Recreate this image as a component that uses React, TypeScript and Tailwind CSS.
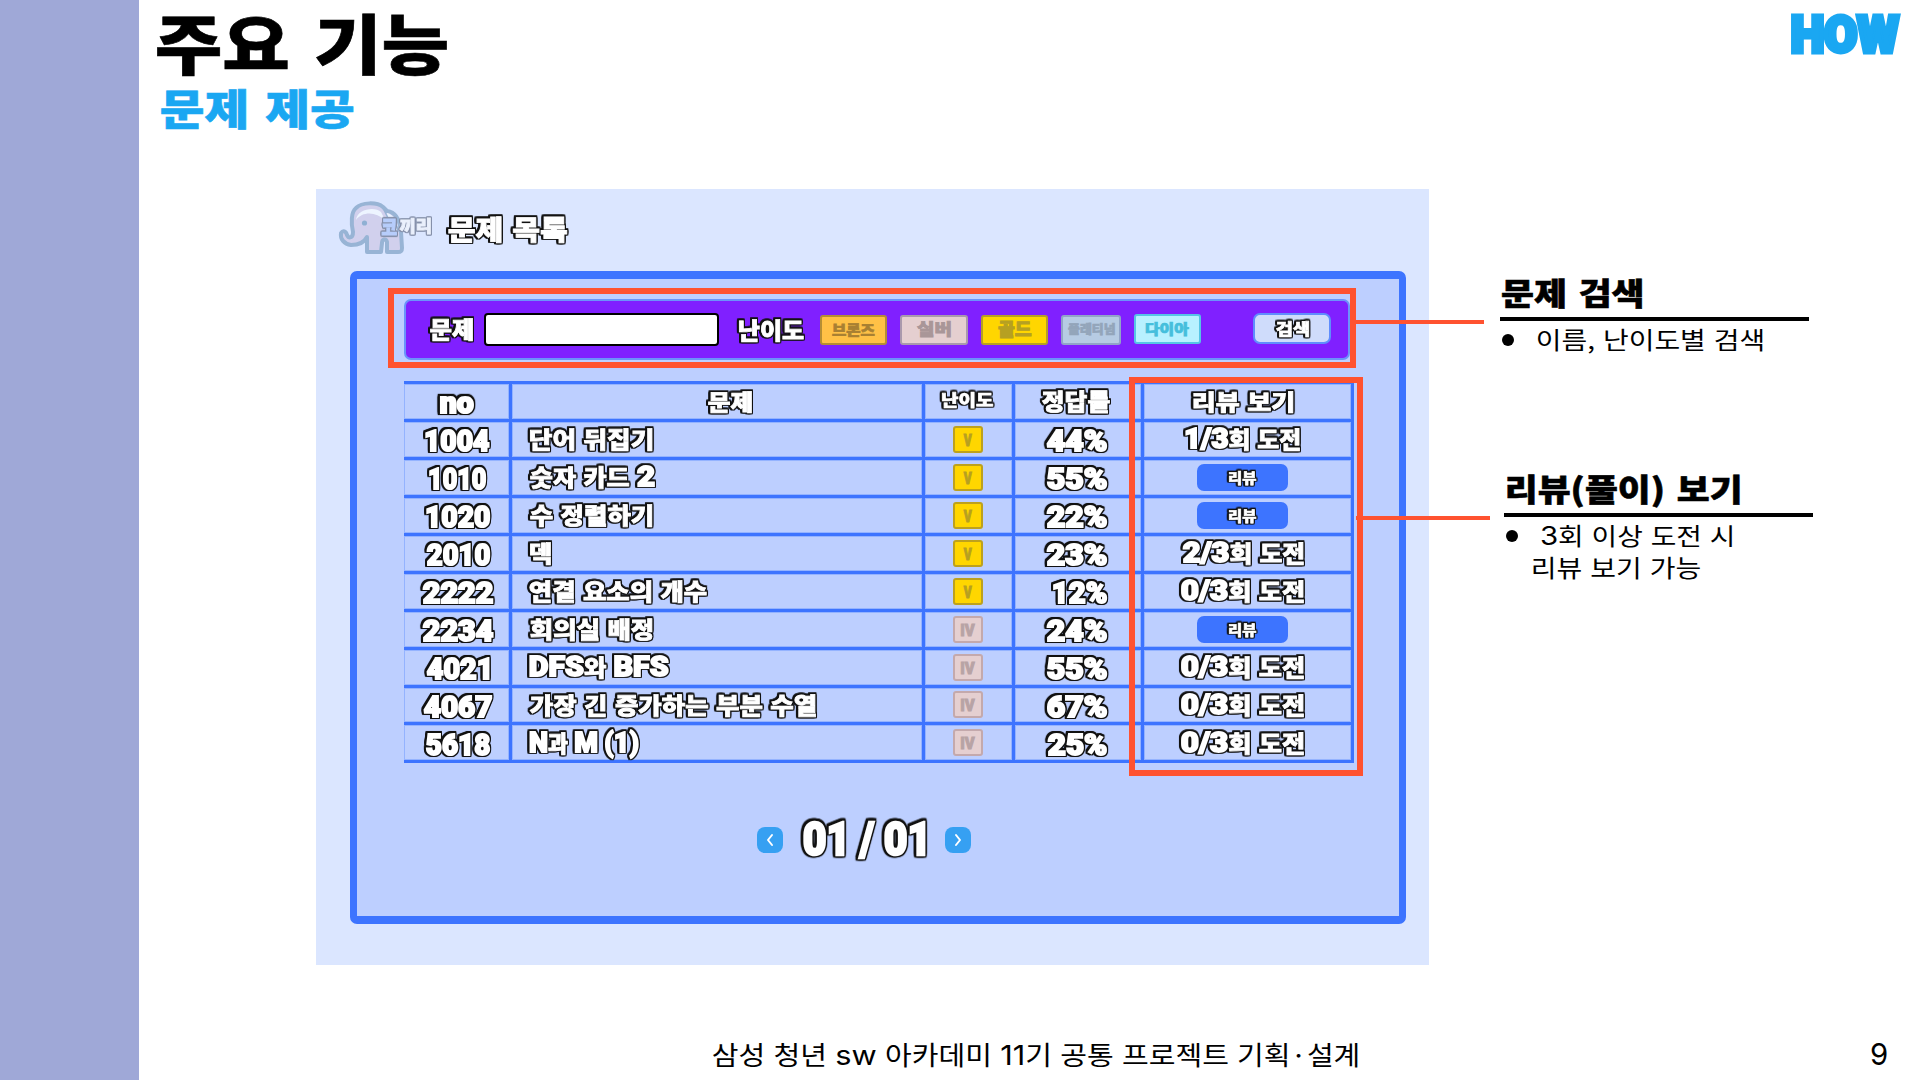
import { useLayoutEffect, useRef } from "react";
import clsx from "clsx";

const LATIN = {
  none: { scale: 1, family: "", cls: "" },
  heavy: { scale: 1.24, family: "Roboto, ", cls: "text-[1.24em] leading-[0] font-[Roboto,sans-serif]" },
  light: { scale: 1.06, family: "Inter, ", cls: "text-[1.06em] leading-[0] font-[Inter,sans-serif]" },
};

/** One line of text whose inked area is stretched to fill its box; `latin` picks the face of latin letters and digits. */
function Ink({ box, text, pad = 0, latin = "none", latinText, children }: { box: string; text: string; pad?: number; latin?: keyof typeof LATIN; latinText?: string; children: string }) {
  const outer = useRef<HTMLDivElement>(null);
  const inner = useRef<HTMLSpanElement>(null);
  const face = LATIN[latin];
  const parts = latin !== "none" ? children.split(/([A-Za-z0-9%/()]+)/).filter(Boolean) : [children];
  const isLatin = (p: string) => latin !== "none" && /^[A-Za-z0-9%/()]/.test(p);
  useLayoutEffect(() => {
    const o = outer.current;
    const s = inner.current;
    const ctx = document.createElement("canvas").getContext("2d");
    if (!o || !s || !ctx) return;
    const cs = getComputedStyle(s);
    const size = parseFloat(cs.fontSize);
    const font = (alt: boolean) =>
      `${cs.fontWeight} ${size * (alt ? face.scale : 1)}px ${alt ? face.family : ""}"Noto Sans CJK KR", sans-serif`;
    ctx.font = font(false);
    ctx.wordSpacing = cs.wordSpacing;
    const strut = ctx.measureText("가");
    const base = (size - strut.fontBoundingBoxAscent - strut.fontBoundingBoxDescent) / 2 + strut.fontBoundingBoxAscent;
    let x = 0;
    let left = 0;
    let right = 0;
    let up = 0;
    let down = 0;
    parts.forEach((p, i) => {
      ctx.font = font(isLatin(p));
      const m = ctx.measureText(p);
      if (i === 0) left = m.actualBoundingBoxLeft;
      right = x + m.actualBoundingBoxRight;
      x += m.width;
      const body = p.replace(/[/(),]/g, "").trim();
      if (body) {
        const v = ctx.measureText(body);
        up = Math.max(up, v.actualBoundingBoxAscent);
        down = Math.max(down, v.actualBoundingBoxDescent);
      }
    });
    const sx = (o.clientWidth - pad * 2) / (left + right);
    const sy = (o.clientHeight - pad * 2) / (up + down);
    s.style.transform = `translate(${pad + left * sx}px, ${pad - (base - up) * sy}px) scale(${sx}, ${sy})`;
  });
  return (
    <div ref={outer} className={clsx("shrink-0", box)}>
      <span
        ref={inner}
        className={clsx("block w-max origin-top-left whitespace-pre leading-none font-['Noto_Sans_CJK_KR',sans-serif]", text)}
      >
        {parts.map((p, i) =>
          isLatin(p) ? (
            <span key={i} className={clsx(face.cls, latinText)}>{p}</span>
          ) : (
            p
          ),
        )}
      </span>
    </div>
  );
}

const OUTLINE =
  "font-black text-white [-webkit-text-stroke:0.9px_white] [word-spacing:0.06em] [filter:drop-shadow(1.2px_0_0_#111)_drop-shadow(-1.2px_0_0_#111)_drop-shadow(0_1.2px_0_#111)_drop-shadow(0_-1.2px_0_#111)]";

function Outlined({ box, size, children }: { box: string; size: string; children: string }) {
  return (
    <Ink box={box} text={clsx(OUTLINE, size)} pad={1.8} latin="heavy" latinText="[-webkit-text-stroke:2px_white]">
      {children}
    </Ink>
  );
}

function Elephant() {
  return (
    <svg className="h-[54px] w-[68px]" viewBox="0 0 68 54" fill="none">
      <path
        d="M15 31 C13 22 13 11 18 7 C24 1 39 1 45 6 L49 10 C58 11 62 20 63 31 L64 47 C64 50 63 51 60 51 L49 51 L49 41 C48 37 44 38 44 42 L43 51 L29 51 L29 36 C26 42 20 44 13 44 C6 43 2 38 3 32 C5 29 8 30 9 34 C11 38 15 37 15 31Z"
        fill="#d1d0ed"
        stroke="#98b4d5"
        strokeWidth="4"
        strokeLinejoin="round"
      />
      <path d="M18 19 C19 8 37 5 43 11 L47 19 C38 11 25 10 18 19Z" fill="#edf4ff" />
      <path d="M49 12 C57 14 60 23 60 30 C56 29 49 21 49 12Z" fill="#eaf2ff" />
      <path d="M46 9 L51 19 C56 19 60 25 60 31" stroke="#98b4d5" strokeWidth="1.500" />
      <circle cx="26.500" cy="22" r="2.600" fill="#8fb0d3" />
    </svg>
  );
}

const GHOST =
  "text-[18px] font-black [filter:drop-shadow(1px_0_0_#8590aa)_drop-shadow(-1px_0_0_#8590aa)_drop-shadow(0_1px_0_#8590aa)_drop-shadow(0_-1px_0_#8590aa)] [-webkit-text-stroke:1px_currentColor]";

type Tier = { label: string; skin: string; box: string; ink: string };

const tiers: Tier[] = [
  { label: "브론즈", skin: "ml-[14px] w-[67px] bg-[#ffc146] border-[#b58e34]", box: "w-[43px] h-[14px]", ink: "text-[#a88032]" },
  { label: "실버", skin: "ml-[13px] w-[68px] bg-[#e5cfd0] border-[#a999ac]", box: "w-[34px] h-[17px]", ink: "text-[#a99698]" },
  { label: "골드", skin: "ml-[13px] w-[67px] bg-[#ffd600] border-[#b6a022]", box: "w-[34px] h-[17px]", ink: "text-[#b6a022]" },
  { label: "플래티넘", skin: "ml-[13px] w-[60px] bg-[#b6cbe3] border-[#91a4c8]", box: "w-[47px] h-[13px]", ink: "text-[#93a5ba]" },
  { label: "다이아", skin: "ml-[13px] -mt-[2px] w-[67px] bg-[#b8f1ff] border-[#55c5e6]", box: "w-[43px] h-[14px]", ink: "text-[#45bfdc]" },
];

function SearchBar() {
  return (
    <div className="flex h-[61px] w-[946px] items-center rounded-[7px] border-2 border-[#6b93fa] bg-[#8020ff]">
      <Outlined box="ml-[22px] w-[47px] h-[26px]" size="text-[25px]">문제</Outlined>
      <div className="ml-[9px] h-[33px] w-[235px] rounded-[4px] border-2 border-black bg-white" />
      <Outlined box="ml-[18px] mt-[2px] w-[69px] h-[26px]" size="text-[25px]">난이도</Outlined>
      {tiers.map((t) => (
        <div key={t.label} className={clsx("flex h-[30px] items-center justify-center rounded-[3px] border-2", t.skin)}>
          <Ink box={t.box} text={clsx("text-[16px] font-black [-webkit-text-stroke:0.9px_currentColor]", t.ink)}>
            {t.label}
          </Ink>
        </div>
      ))}
      <div className="-mt-[2px] ml-[52px] flex h-[31px] w-[78px] items-center justify-center rounded-[7px] border-2 border-[#5f8dfd] bg-[#cfdcfb]">
        <Outlined box="w-[37px] h-[20px]" size="text-[22px]">검색</Outlined>
      </div>
    </div>
  );
}

type Problem = {
  no: string; noBox: string;
  name: string; nameBox: string;
  tier: "V" | "IV";
  rate: string; rateBox: string;
  tries: string | null; triesBox?: string;
};

const problems: Problem[] = [
  { no: "1004", noBox: "w-[67px]", name: "단어 뒤집기", nameBox: "w-[126px]", tier: "V", rate: "44%", rateBox: "w-[63px]", tries: "1/3회 도전", triesBox: "w-[118px]" },
  { no: "1010", noBox: "w-[59px]", name: "숫자 카드 2", nameBox: "w-[128px]", tier: "V", rate: "55%", rateBox: "w-[62px]", tries: null },
  { no: "1020", noBox: "w-[66px]", name: "수 정렬하기", nameBox: "w-[126px]", tier: "V", rate: "22%", rateBox: "w-[63px]", tries: null },
  { no: "2010", noBox: "w-[66px]", name: "덱", nameBox: "w-[25px]", tier: "V", rate: "23%", rateBox: "w-[63px]", tries: "2/3회 도전", triesBox: "w-[125px]" },
  { no: "2222", noBox: "w-[74px]", name: "연결 요소의 개수", nameBox: "w-[181px]", tier: "V", rate: "12%", rateBox: "w-[56px]", tries: "0/3회 도전", triesBox: "w-[126px]" },
  { no: "2234", noBox: "w-[74px]", name: "회의실 배정", nameBox: "w-[126px]", tier: "IV", rate: "24%", rateBox: "w-[63px]", tries: null },
  { no: "4021", noBox: "w-[66px]", name: "DFS와 BFS", nameBox: "w-[142px]", tier: "IV", rate: "55%", rateBox: "w-[62px]", tries: "0/3회 도전", triesBox: "w-[126px]" },
  { no: "4067", noBox: "w-[72px]", name: "가장 긴 증가하는 부분 수열", nameBox: "w-[290px]", tier: "IV", rate: "67%", rateBox: "w-[62px]", tries: "0/3회 도전", triesBox: "w-[126px]" },
  { no: "5618", noBox: "w-[66px]", name: "N과 M (1)", nameBox: "w-[112px]", tier: "IV", rate: "25%", rateBox: "w-[62px]", tries: "0/3회 도전", triesBox: "w-[126px]" },
];

const ROW = "grid h-[37.950px] grid-cols-[108px_413px_90px_129px_210px] border-t-[3px] border-[#3d74ff]";
const CELL = "flex items-center border-r-[3px] border-[#3d74ff] shadow-[inset_0_0_0_1px_#94b3ff]";

function ProblemTable() {
  return (
    <div className="w-[950px] border-b-[3px] border-[#3d74ff]">
      <div className={ROW}>
        <div className={clsx(CELL, "justify-center pl-[1px]")}><Outlined box="mt-[8px] w-[36px] h-[20px]" size="text-[22px]">no</Outlined></div>
        <div className={clsx(CELL, "justify-center pl-[25px]")}><Outlined box="mt-[2px] w-[48px] h-[25px]" size="text-[25px]">문제</Outlined></div>
        <div className={clsx(CELL, "justify-center pr-[3px]")}><Outlined box="-mt-[3px] w-[55px] h-[20px]" size="text-[22px]">난이도</Outlined></div>
        <div className={clsx(CELL, "justify-end pr-[29px]")}><Outlined box="mt-[2px] w-[72px] h-[26px]" size="text-[25px]">정답률</Outlined></div>
        <div className={clsx(CELL, "justify-center pr-[9px]")}><Outlined box="mt-[3px] w-[103px] h-[25px]" size="text-[25px]">리뷰 보기</Outlined></div>
      </div>
      {problems.map((p) => (
        <div key={p.no} className={ROW}>
          <div className={clsx(CELL, "justify-center pl-[2px]")}><Outlined box={clsx("mt-[3px] h-[25px]", p.noBox)} size="text-[24px]">{p.no}</Outlined></div>
          <div className={clsx(CELL, "pl-[16px]")}>
            <Outlined box={clsx("mt-[2px] h-[26px]", p.nameBox)} size="text-[25px]">{p.name}</Outlined>
          </div>
          <div className={clsx(CELL, "justify-center pr-[2px]")}>
            <div
              className={clsx(
                "flex h-[27px] w-[30px] items-center justify-center rounded-[3px] border-2",
                p.tier === "V" ? "border-[#bda11d] bg-[#ffd600] text-[#b7a020]" : "border-[#c4a9ac] bg-[#e5cfd0] text-[#b8a3a5]",
              )}
            >
              <Ink box={clsx("mt-[1px] h-[12px]", p.tier === "V" ? "w-[9px]" : "w-[14px]")} latin="heavy" text="text-[14px] font-black [-webkit-text-stroke:1px_currentColor]">
                {p.tier}
              </Ink>
            </div>
          </div>
          <div className={clsx(CELL, "justify-end pr-[33px]")}>
            <Outlined box={clsx("mt-[3px] h-[25px]", p.rateBox)} size="text-[24px]">{p.rate}</Outlined>
          </div>
          <div className={clsx(CELL, "justify-center", p.tries ? "pr-[9px]" : "pr-[11px]")}>
            {p.tries ? (
              <Outlined box={clsx("mt-[2px] h-[26px]", p.triesBox)} size="text-[25px]">{p.tries}</Outlined>
            ) : (
              <div className="mt-[1px] flex h-[27px] w-[91px] items-center justify-center rounded-[7px] bg-[#3d74ff]">
                <Outlined box="w-[31px] h-[18px]" size="text-[20px]">리뷰</Outlined>
              </div>
            )}
          </div>
        </div>
      ))}
    </div>
  );
}

function PageButton({ d }: { d: string }) {
  return (
    <div className="flex h-[26px] w-[26px] items-center justify-center rounded-[8px] bg-[#36a0f2]">
      <svg className="h-[14px] w-[10px]" viewBox="0 0 10 14" fill="none" stroke="white" strokeWidth="2" strokeLinecap="round" strokeLinejoin="round">
        <path d={d} />
      </svg>
    </div>
  );
}

function ProblemScreen() {
  return (
    <div className="relative h-[776px] w-[1113px] shrink-0 bg-[#dbe6ff]">
      <div className="relative flex h-[82px] items-start pl-[22px] pt-[12px]">
        <Elephant />
        <div className="absolute left-[64px] top-[27px] flex">
          <Ink box="w-[18px] h-[20px]" pad={1.5} text={clsx(GHOST, "text-[#b7cdfb]")}>코</Ink>
          <Ink box="w-[34px] h-[20px]" pad={1.5} text={clsx(GHOST, "text-[#eaf0fc]")}>끼리</Ink>
        </div>
        <Outlined box="ml-[41px] mt-[13px] w-[122px] h-[31px]" size="text-[30px]">문제 목록</Outlined>
      </div>
      <div className="ml-[34px] h-[653px] w-[1056px] rounded-[7px] border-x-[7px] border-y-[8px] border-[#3d74ff] bg-[#bdcfff] pl-[47px] pt-[20px]">
        <SearchBar />
        <div className="h-[21px]" />
        <ProblemTable />
        <div className="mt-[59px] flex items-center pl-[353px]">
          <PageButton d="M7 2 L3 7 L7 12" />
          <Outlined box="ml-[19px] -mt-[1px] mr-[2px] w-[121px] h-[36px]" size="text-[30px]">01 / 01</Outlined>
          <div className="w-[20px]" />
          <PageButton d="M3 2 L7 7 L3 12" />
        </div>
      </div>
      <div className="absolute left-[72px] top-[99px] h-[80px] w-[968px] border-[6px] border-[#ff5230]" />
      <div className="absolute left-[813px] top-[188px] h-[399px] w-[234px] border-[6px] border-[#ff5230]" />
      <div className="absolute left-[1038px] top-[131px] h-[4px] w-[130px] bg-[#ff5230]" />
      <div className="absolute left-[1040px] top-[327px] h-[4px] w-[134px] bg-[#ff5230]" />
    </div>
  );
}

const HEAVY = "font-black [-webkit-text-stroke:0.6px_currentColor] [word-spacing:0.1em]";
const THIN = "text-[25px] font-normal [word-spacing:0.06em]";

export default function App() {
  return (
    <div className="flex h-[1080px] w-[1920px] overflow-hidden bg-white text-black">
      <aside className="w-[139px] shrink-0 bg-[#9fa8d7]" />
      <main className="flex flex-1 flex-col">
        <header className="flex h-[189px] items-start justify-between pl-[18px] pr-[19px] pt-[13px]">
          <div>
            <Ink box="w-[290px] h-[63px]" text={clsx("text-[64px]", HEAVY)}>주요 기능</Ink>
            <Ink box="ml-[4px] mt-[13px] w-[193px] h-[41px]" text={clsx("text-[42px] text-[#1aa7f2]", HEAVY)}>문제 제공</Ink>
          </div>
          <Ink box="w-[111px] h-[43px]" pad={2.5} latin="heavy" text="text-[42px] font-black text-[#1aa7f2] [-webkit-text-stroke:5px_#1aa7f2]">HOW</Ink>
        </header>
        <section className="flex pl-[177px]">
          <ProblemScreen />
          <div className="pl-[71px] pt-[89px]">
            <Ink box="ml-[2px] w-[140px] h-[31px]" text={clsx("text-[33px]", HEAVY)}>문제 검색</Ink>
            <div className="mt-[8px] h-[4px] w-[309px] bg-black" />
            <div className="mt-[7px] flex items-center pl-[2px]">
              <div className="h-[12px] w-[12px] rounded-full bg-black" />
              <Ink box="ml-[24px] w-[225px] h-[24px]" text={THIN}>이름, 난이도별 검색</Ink>
            </div>
            <Ink box="ml-[7px] mt-[122px] w-[233px] h-[31px]" text={clsx("text-[33px]", HEAVY)}>리뷰(풀이) 보기</Ink>
            <div className="ml-[4px] mt-[8px] h-[4px] w-[309px] bg-black" />
            <div className="mt-[7px] flex items-center pl-[6px]">
              <div className="h-[12px] w-[12px] rounded-full bg-black" />
              <Ink box="ml-[23px] w-[191px] h-[24px]" latin="light" text={THIN}>3회 이상 도전 시</Ink>
            </div>
            <Ink box="ml-[33px] mt-[8px] w-[167px] h-[24px]" text={THIN}>리뷰 보기 가능</Ink>
          </div>
        </section>
        <footer className="mt-[78px] flex items-start pl-[574px]">
          <Ink box="w-[645px] h-[26px]" latin="light" text={THIN}>삼성 청년 sw 아카데미 11기 공통 프로젝트 기획·설계</Ink>
          <Ink box="ml-[513px] w-[16px] h-[23px]" latin="light" text="text-[26px] font-normal">9</Ink>
        </footer>
      </main>
    </div>
  );
}
